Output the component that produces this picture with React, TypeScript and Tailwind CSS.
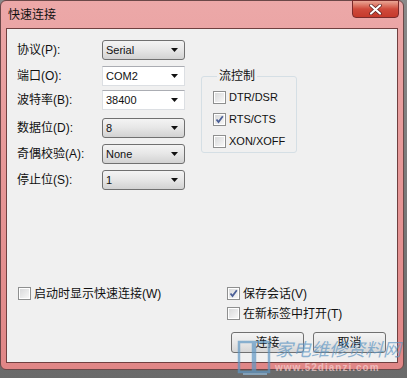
import React from 'react';

const rows = [
  { label: '协议(P):', value: 'Serial', editable: false, mt: 'mt-[11px]' },
  { label: '端口(O):', value: 'COM2', editable: true, mt: 'mt-[6px]' },
  { label: '波特率(B):', value: '38400', editable: true, mt: 'mt-[4px]' },
  { label: '数据位(D):', value: '8', editable: false, mt: 'mt-[8px]' },
  { label: '奇偶校验(A):', value: 'None', editable: false, mt: 'mt-[6px]' },
  { label: '停止位(S):', value: '1', editable: false, mt: 'mt-[6px]' },
];

function Arrow() {
  return (
    <svg width="7" height="4" viewBox="0 0 7 4" className="shrink-0">
      <path d="M0 0 H7 L3.5 4 Z" fill="#111" />
    </svg>
  );
}

function Combo({ value, editable }: { value: string; editable: boolean }) {
  const box = editable
    ? 'bg-white border border-[#dcdfe3] border-t-[#abadb3]'
    : 'rounded-[3px] border border-[#707070] bg-gradient-to-b from-[#f4f4f4] via-[#e6e6e6] to-[#d2d2d2]';
  return (
    <div className={`flex h-[20px] w-[83px] items-center justify-between pl-[3px] pr-[6px] ${box}`}>
      <span className="text-[11px] leading-none text-[#111]">{value}</span>
      <Arrow />
    </div>
  );
}

function Check({ checked }: { checked?: boolean }) {
  return (
    <span className="flex h-[13px] w-[13px] shrink-0 items-center justify-center border border-[#8e8f8f] bg-white">
      <span className="flex h-[9px] w-[9px] items-center justify-center bg-gradient-to-br from-[#d9dadb] to-[#f7f7f7]">
        {checked && (
          <svg width="9" height="9" viewBox="0 0 9 9">
            <path d="M1.5 4.5 L3.5 7 L7.8 1.2" fill="none" stroke="#4b5f97" strokeWidth="1.8" />
          </svg>
        )}
      </span>
    </span>
  );
}

function CheckItem({ label, checked, small }: { label: string; checked?: boolean; small?: boolean }) {
  return (
    <div className="flex h-[13px] items-center gap-[3px]">
      <Check checked={checked} />
      <span className={`${small ? 'text-[11px]' : 'text-[12px]'} leading-none text-[#111]`}>{label}</span>
    </div>
  );
}

function Button({ label }: { label: string }) {
  return (
    <div className="flex h-[21px] w-[73px] items-center justify-center rounded-[3px] border border-[#707070] bg-gradient-to-b from-[#f4f4f4] via-[#e8e8e8] to-[#d6d6d6] text-[12px] text-[#111]">
      {label}
    </div>
  );
}

export default function App() {
  return (
    <div className="relative h-[378px] w-[407px] overflow-hidden bg-gradient-to-b from-[#8a8a8a] to-[#6a6a6a] font-['Liberation_Sans','Noto_Sans_CJK_SC',sans-serif]">
      {/* window frame */}
      <div className="relative flex h-[370px] w-[404px] flex-col rounded-[6px] border border-[#6b4848] bg-gradient-to-b from-[#eca8a8] via-[#e69696] to-[#e08686] px-[5px] pb-[6px]">
        <div className="flex h-[27px] items-center pl-[2px] text-[12px] text-[#111]">
          快速连接
        </div>
        <div className="absolute right-[4px] top-[-1px] flex h-[18px] w-[47px] items-center justify-center rounded-b-[4px] border border-[#7a2b2b] bg-gradient-to-b from-[#e9a595] via-[#cf4a3c] to-[#c53a2c]">
          <svg width="13" height="11" viewBox="0 0 13 11">
            <path d="M2 1.5 L11 9.5 M11 1.5 L2 9.5" stroke="#5a2020" strokeWidth="3.6" strokeLinecap="round" />
            <path d="M2 1.5 L11 9.5 M11 1.5 L2 9.5" stroke="#fff" strokeWidth="2.2" strokeLinecap="round" />
          </svg>
        </div>

        {/* client area */}
        <div className="flex flex-1 flex-col border border-[#704040] bg-[#f0f0f0] pb-[9px]">
          <div className="flex">
            <div className="flex w-[178px] flex-col pl-[10px]">
              {rows.map((r) => (
                <div key={r.label} className={`flex items-center ${r.mt}`}>
                  <span className="w-[85px] text-[12px] text-[#111]">{r.label}</span>
                  <Combo value={r.value} editable={r.editable} />
                </div>
              ))}
            </div>
            <fieldset className="ml-[16px] mt-[38px] h-[86px] w-[96px] rounded-[3px] border border-[#d5dfe5] px-[11px] pt-[6px]">
              <legend className="ml-[4px] px-[2px] text-[12px] text-[#111]">流控制</legend>
              <div className="flex flex-col gap-[9px]">
                <CheckItem label="DTR/DSR" small />
                <CheckItem label="RTS/CTS" checked small />
                <CheckItem label="XON/XOFF" small />
              </div>
            </fieldset>
          </div>

          <div className="mt-auto flex flex-col">
            <div className="flex">
              <div className="w-[220px] pl-[11px]">
                <CheckItem label="启动时显示快速连接(W)" />
              </div>
              <CheckItem label="保存会话(V)" checked />
            </div>
            <div className="mt-[7px] pl-[220px]">
              <CheckItem label="在新标签中打开(T)" />
            </div>
            <div className="mt-[12px] flex gap-[9px] pl-[224px]">
              <Button label="连接" />
              <Button label="取消" />
            </div>
          </div>
        </div>
      </div>

      {/* watermark */}
      <div className="pointer-events-none absolute left-[237px] top-[338px] flex items-start opacity-70">
        <svg width="36" height="38" viewBox="0 0 36 38">
          <path d="M2 4 H16 V34 H2 Z M18 4 H32 V34 H18 Z" fill="none" stroke="#5f97c4" strokeWidth="2.5" />
          <path d="M6 36 H30" stroke="#8fb8d8" strokeWidth="2" />
        </svg>
        <div className="ml-[2px] flex flex-col">
          <span className="text-[18px] italic leading-[24px] text-[#5f97c4]">家电维修资料网</span>
          <span className="text-[10px] font-bold leading-[12px] tracking-[1px] text-[#f4d0d0]">www.52dianzi.com</span>
        </div>
      </div>
    </div>
  );
}
